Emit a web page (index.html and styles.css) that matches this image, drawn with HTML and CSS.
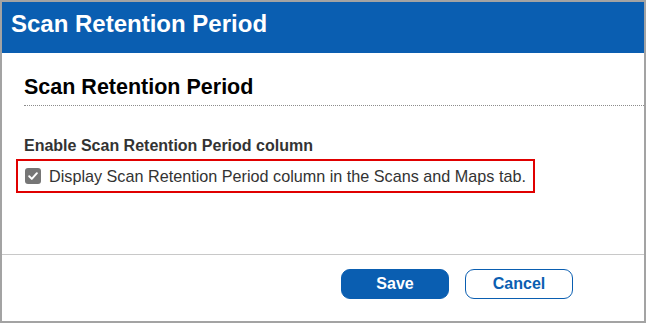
FILE: index.html
```html
<!DOCTYPE html>
<html>
<head>
<meta charset="utf-8">
<link rel="stylesheet" href="styles.css">
</head>
<body>
<div class="dialog">
  <div class="header">Scan Retention Period</div>
  <div class="body">
    <h2 class="section-title">Scan Retention Period</h2>
    <div class="field-label">Enable Scan Retention Period column</div>
    <label class="check-row">
      <span class="checkbox">
        <svg width="12" height="12" viewBox="0 0 12 12"><path d="M2.2 6.3 L4.8 8.9 L9.9 3.2" fill="none" stroke="#fff" stroke-width="2" stroke-linecap="round" stroke-linejoin="round"/></svg>
      </span>
      <span class="check-text">Display Scan Retention Period column in the Scans and Maps tab.</span>
    </label>
  </div>
  <div class="footer">
    <button class="btn btn-primary">Save</button>
    <button class="btn btn-secondary">Cancel</button>
  </div>
</div>
</body>
</html>
```

FILE: styles.css
```css
html, body {
  margin: 0;
  padding: 0;
  background: #ffffff;
}
body {
  font-family: "Liberation Sans", Arial, sans-serif;
}
.dialog {
  width: 646px;
  height: 323px;
  box-sizing: border-box;
  border: 2px solid #a3a3a3;
  display: flex;
  flex-direction: column;
  background: #fff;
}
.header {
  height: 51px;
  background: #0a5eb1;
  color: #fff;
  font-weight: bold;
  font-size: 24px;
  line-height: 44px;
  padding-left: 9px;
}
.body {
  flex: 1;
  padding-left: 22px;
  border-bottom: 1px solid #c8c8c8;
}
.section-title {
  margin: 0;
  margin-top: 22px;
  font-size: 21.5px;
  line-height: 24px;
  color: #000;
  font-weight: bold;
  padding-bottom: 6px;
  border-bottom: 1px dotted #8c8c8c;
}
.field-label {
  margin-top: 31px;
  font-size: 16px;
  font-weight: bold;
  color: #333;
  line-height: 18px;
}
.check-row {
  margin-top: 4px;
  margin-left: -8px;
  display: inline-flex;
  align-items: center;
  border: 2px solid #e00000;
  height: 30px;
  padding: 0 7px;
  gap: 8px;
}
.checkbox {
  width: 16px;
  height: 16px;
  border-radius: 3px;
  background: #767676;
  display: flex;
  align-items: center;
  justify-content: center;
}
.check-text {
  font-size: 16.2px;
  color: #333;
}
.footer {
  height: 66px;
  display: flex;
  justify-content: flex-end;
  align-items: flex-start;
  padding-top: 14px;
  padding-right: 71px;
  box-sizing: border-box;
  gap: 16px;
}
.btn {
  font-family: "Liberation Sans", Arial, sans-serif;
  font-weight: bold;
  font-size: 16px;
  width: 108px;
  height: 30px;
  border-radius: 9px;
  cursor: pointer;
}
.btn-primary {
  background: #0a5eb1;
  color: #fff;
  border: 1px solid #0a5eb1;
}
.btn-secondary {
  background: #fff;
  color: #0a5eb1;
  border: 1px solid #0a5eb1;
}
```
